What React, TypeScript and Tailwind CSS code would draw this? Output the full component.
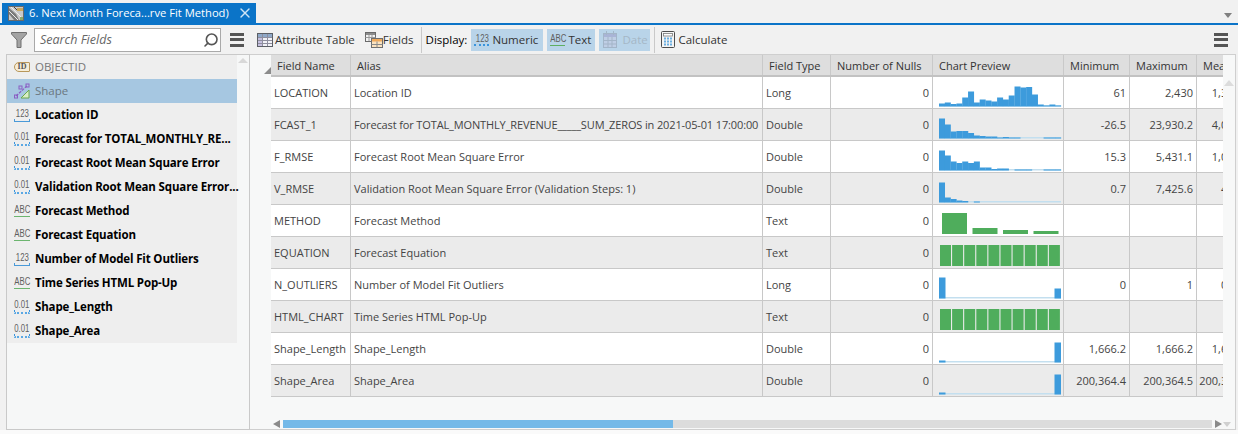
import { Search, X } from 'lucide-react'
import type { ReactNode } from 'react'

type FieldKind = 'long' | 'double' | 'text'

type Row = {
  name: string
  alias: string
  type: string
  chart: ReactNode
  min?: string
  max?: string
  mean?: string
}

const BLUE = '#3d9bdc'
const PALE = '#c3dfef'
const GREEN = '#4fad5c'

// heights in px, one per bin, left to right
const Hist = ({ bins }: { bins: number[] }) => {
  const w = 122 / bins.length
  return (
    <svg width="131" height="31" className="block">
      <rect x="6" y="28" width="122" height="1.5" fill={PALE} />
      {bins.map((h, i) =>
        h > 0 ? <rect key={i} x={6 + i * w} y={29.5 - h} width={w + 0.2} height={h} fill={BLUE} /> : null,
      )}
    </svg>
  )
}

const Bars = ({ bars, width, gap, start }: { bars: number[]; width: number; gap: number; start: number }) => (
  <svg width="131" height="31" className="block">
    {bars.map((h, i) => (
      <rect key={i} x={start + i * (width + gap)} y={29 - h} width={width} height={h} fill={GREEN} />
    ))}
  </svg>
)

const Even = () => <Bars bars={[21, 21, 21, 21, 21, 21, 21, 21, 21, 21]} width={11} gap={1.1} start={7} />

const EndBins = ({ first, last }: { first: number; last: number }) => (
  <svg width="131" height="31" className="block">
    <rect x="6" y="28" width="122" height="1.5" fill={PALE} />
    <rect x="6" y={29.5 - first} width="6.5" height={first} fill={BLUE} />
    <rect x="121.5" y={29.5 - last} width="6.5" height={last} fill={BLUE} />
  </svg>
)

const rows: Row[] = [
  {
    name: 'LOCATION',
    alias: 'Location ID',
    type: 'Long',
    chart: <Hist bins={[3, 4, 2.5, 3, 9, 15, 4, 7, 6, 5, 9, 7, 11, 20, 19, 19.5, 12, 2, 1, 2, 1]} />,
    min: '61',
    max: '2,430',
    mean: '1,345.7',
  },
  {
    name: 'FCAST_1',
    alias: 'Forecast for TOTAL_MONTHLY_REVENUE_____SUM_ZEROS in 2021-05-01 17:00:00',
    type: 'Double',
    chart: <Hist bins={[20, 14, 7, 7.5, 7.5, 5.5, 3, 2.5, 2, 2, 1, 1.5, 1, 1, 0, 0, 0, 0, 1, 1, 1]} />,
    min: '-26.5',
    max: '23,930.2',
    mean: '4,012.9',
  },
  {
    name: 'F_RMSE',
    alias: 'Forecast Root Mean Square Error',
    type: 'Double',
    chart: <Hist bins={[20, 15, 9, 7.5, 9, 7.5, 9, 3, 3, 1.5, 2, 2, 0, 1, 1, 1, 0, 0, 1, 1, 1]} />,
    min: '15.3',
    max: '5,431.1',
    mean: '1,027.4',
  },
  {
    name: 'V_RMSE',
    alias: 'Validation Root Mean Square Error (Validation Steps: 1)',
    type: 'Double',
    chart: <Hist bins={[20, 5, 3.5, 2, 1.5, 0, 1, 0, 0, 0, 0, 0, 0, 0, 0, 0, 0, 0, 0, 0, 0]} />,
    min: '0.7',
    max: '7,425.6',
    mean: '417.6',
  },
  {
    name: 'METHOD',
    alias: 'Forecast Method',
    type: 'Text',
    chart: <Bars bars={[21, 6, 4, 3]} width={25} gap={5.5} start={9} />,
  },
  { name: 'EQUATION', alias: 'Forecast Equation', type: 'Text', chart: <Even /> },
  {
    name: 'N_OUTLIERS',
    alias: 'Number of Model Fit Outliers',
    type: 'Long',
    chart: <EndBins first={21} last={10} />,
    min: '0',
    max: '1',
    mean: '0.102',
  },
  { name: 'HTML_CHART', alias: 'Time Series HTML Pop-Up', type: 'Text', chart: <Even /> },
  {
    name: 'Shape_Length',
    alias: 'Shape_Length',
    type: 'Double',
    chart: <EndBins first={2} last={20} />,
    min: '1,666.2',
    max: '1,666.2',
    mean: '1,666.2',
  },
  {
    name: 'Shape_Area',
    alias: 'Shape_Area',
    type: 'Double',
    chart: <EndBins first={2} last={20} />,
    min: '200,364.4',
    max: '200,364.5',
    mean: '200,364.5',
  },
]

const fields: { label: string; kind: FieldKind }[] = [
  { label: 'Location ID', kind: 'long' },
  { label: 'Forecast for TOTAL_MONTHLY_RE...', kind: 'double' },
  { label: 'Forecast Root Mean Square Error', kind: 'double' },
  { label: 'Validation Root Mean Square Error...', kind: 'double' },
  { label: 'Forecast Method', kind: 'text' },
  { label: 'Forecast Equation', kind: 'text' },
  { label: 'Number of Model Fit Outliers', kind: 'long' },
  { label: 'Time Series HTML Pop-Up', kind: 'text' },
  { label: 'Shape_Length', kind: 'double' },
  { label: 'Shape_Area', kind: 'double' },
]

const KindLabel = ({ kind }: { kind: FieldKind }) => {
  const label = kind === 'long' ? '123' : kind === 'double' ? '0.01' : 'ABC'
  return (
    <div className="flex h-[9px] justify-center">
      <span className="scale-x-[.78] font-['Liberation_Sans',sans-serif] text-[10px] leading-[9px] font-normal whitespace-nowrap text-[#5f5f5f]">
        {label}
      </span>
    </div>
  )
}

const KindIcon = ({ kind }: { kind: FieldKind }) => {
  const line =
    kind === 'text'
      ? 'mt-[2px] border-b-[1.5px] border-[#6cb56f]'
      : kind === 'long'
        ? 'mt-[1px] h-[3px] border-x border-b border-[#4a9ad8]'
        : 'mt-[1px] h-[4px] border-x border-b-2 border-[#3a94dc] border-b-[#5aa8e4] border-dotted'
  return (
    <div className="flex w-[16px] flex-col items-stretch">
      <KindLabel kind={kind} />
      <div className={line} />
    </div>
  )
}

const Hamburger = () => (
  <div className="flex w-[14px] flex-col gap-[2.5px]">
    <div className="h-[3px] bg-[#555]" />
    <div className="h-[3px] bg-[#555]" />
    <div className="h-[3px] bg-[#555]" />
  </div>
)

const Funnel = () => (
  <svg width="16" height="16" viewBox="0 0 16 16">
    <path d="M0.5 0.5h15v1.5L10 8v7.5H6V8L0.5 2z" fill="#a3a3a3" stroke="#707070" />
  </svg>
)

const TabIcon = () => (
  <svg width="16" height="15" viewBox="0 0 16 15">
    <rect x="0.5" y="0.5" width="15" height="14" fill="#c9c9c9" stroke="#6a6a6a" />
    <path d="M1 2l7 6 3 6H6L1 8z" fill="#7b7b7b" />
    <path d="M1 5l9 9M3 1l11 11" stroke="#eeeeee" />
    <rect x="9" y="2" width="6" height="3" fill="#c9a860" />
    <path d="M6 1l3 3" stroke="#444" />
    <rect x="12" y="11" width="3" height="3" fill="#8aa66b" />
  </svg>
)

const TableIcon = () => (
  <svg width="16" height="14" viewBox="0 0 16 14">
    <rect x="0.5" y="0.5" width="15" height="13" fill="#f2f2f7" stroke="#5c5f66" />
    <rect x="1" y="1" width="14" height="3" fill="#8fa8c8" />
    <rect x="1" y="4" width="4" height="9" fill="#c6c0e0" />
    <path d="M5.5 1v12M10.5 1v12M1 4.5h14M1 7.5h14M1 10.5h14" stroke="#8f8f9f" />
  </svg>
)

const FieldsIcon = () => (
  <svg width="18" height="16" viewBox="0 0 18 16">
    <rect x="0.5" y="0.5" width="10" height="9" fill="#f3f3f3" stroke="#6a6a6a" />
    <rect x="1" y="1" width="9" height="2" fill="#8c8c8c" />
    <path d="M0.5 5.5h10M4 3v6M7 3v6" stroke="#9a9a9a" />
    <rect x="6.5" y="6.5" width="11" height="9" fill="#fbe3c0" stroke="#6e6e6e" />
    <rect x="7" y="7" width="10" height="2.5" fill="#f0aa5c" />
    <path d="M12 9.5v6M6.5 12.5h11" stroke="#8a8a8a" />
  </svg>
)

const CalendarIcon = () => (
  <svg width="14" height="17" viewBox="0 0 14 17" opacity="0.5">
    <rect x="0.5" y="2.5" width="13" height="14" fill="#c5c9e2" stroke="#8f97a8" />
    <rect x="1" y="3" width="12" height="3" fill="#9a96c4" />
    <path d="M5 6v10M9 6v10M0.5 9.5h13M0.5 13h13" stroke="#8f97a8" />
    <path d="M3.5 0v4M10.5 0v4" stroke="#8f97a8" />
  </svg>
)

const CalcIcon = () => (
  <svg width="14" height="17" viewBox="0 0 14 17">
    <rect x="0.5" y="0.5" width="13" height="16" rx="1" fill="#f4f4f4" stroke="#4d4d4d" />
    <rect x="2.5" y="2.5" width="9" height="2.5" fill="#fff" stroke="#7a7a7a" strokeWidth="0.8" />
    <path d="M3 7.5h2M6 7.5h2M9 7.5h2M3 10.5h2M6 10.5h2M9 10.5h2M3 13.5h2M6 13.5h2M9 13.5h2" stroke="#6aaee0" strokeWidth="2" />
  </svg>
)

const DisplayToggle = ({ children, className }: { children: ReactNode; className: string }) => (
  <div className={`flex h-[22px] items-center bg-[#b9d4e9] ${className}`}>{children}</div>
)

const headers = ['Field Name', 'Alias', 'Field Type', 'Number of Nulls', 'Chart Preview', 'Minimum', 'Maximum', 'Mean']
const COLS = 'grid-cols-[80px_412px_68px_102px_131px_66px_67px_55px]'

const FieldList = () => (
  <div className="flex h-[376px] w-[244px] flex-none border border-[#c9c9c9] bg-[#f6f7f7]">
    <div className="w-[230px] flex-none">
      <div className="bg-[#eeeeee]">
        <div className="flex h-[24px] items-center pl-[7px]">
          <div className="flex h-[10px] w-[16px] items-center justify-center rounded-l-[5px] rounded-r-[1px] border border-[#b8975a] bg-[#f6edd8] font-['Liberation_Serif',serif] text-[8px] font-bold text-[#555]">
            ID
          </div>
          <span className="ml-[5px] text-[11.5px] text-[#777]">OBJECTID</span>
        </div>
        <div className="flex h-[24px] items-center bg-[#a6c7e1] pl-[7px]">
          <svg width="16" height="16" viewBox="0 0 16 16">
            <path d="M2 13L13 3" stroke="#8a5fc4" strokeWidth="1.2" strokeDasharray="3 1" />
            <rect x="0.5" y="12" width="3" height="3" fill="none" stroke="#8a5fc4" />
            <rect x="5" y="3" width="3" height="3" fill="none" stroke="#8a5fc4" />
            <rect x="12" y="1" width="3" height="3" fill="none" stroke="#8a5fc4" />
            <path d="M7 15L15 7v8z" fill="#d9eec4" stroke="#6aa84f" />
          </svg>
          <span className="ml-[5px] text-[11.5px] text-[#6b7780]">Shape</span>
        </div>
        {fields.map((f) => (
          <div key={f.label} className="flex h-[24px] items-center pl-[7px]">
            <KindIcon kind={f.kind} />
            <span className="ml-[5px] text-[11.5px] font-bold tracking-[-0.15px] whitespace-nowrap text-black">{f.label}</span>
          </div>
        ))}
      </div>
    </div>
    <div className="flex flex-1 justify-center pt-[3px]">
      <div className="h-0 w-0 border-x-[5px] border-b-[5px] border-x-transparent border-b-[#d8d8d8]" />
    </div>
  </div>
)

const FieldTable = () => (
  <div className="flex h-[376px] flex-1 flex-col border-t border-r border-b border-[#cfcfcf] bg-[#f7f8f8]">
    <div className="flex min-h-0 flex-1">
      <div className="relative w-[21px] flex-none">
        <div className="absolute top-[12px] right-[0px] h-0 w-0 border-b-[7px] border-l-[7px] border-b-[#8c8c8c] border-l-transparent" />
      </div>
      <div className="w-[952px] flex-none overflow-hidden">
        <div className={`grid h-[22px] w-[981px] ${COLS} border-b-2 border-[#c2c2c2] bg-[#dedede]`}>
          {headers.map((h) => (
            <div key={h} className="flex items-center border-r border-[#c9c9c9] pt-[2px] pl-[6px] text-[11px] whitespace-nowrap text-[#333]">
              {h}
            </div>
          ))}
        </div>
        {rows.map((r, i) => (
          <div
            key={r.name}
            className={`grid h-[32px] w-[981px] ${COLS} border-b border-[#c8c8c8] text-[11px] whitespace-nowrap text-[#444] ${i % 2 === 1 ? 'bg-[#ebebeb]' : 'bg-white'}`}
          >
            <div className="flex items-center border-r border-[#c8c8c8] pt-[2px] pl-[3px]">{r.name}</div>
            <div className={`flex items-center border-r border-[#c8c8c8] pt-[2px] pl-[3px] ${r.name === 'FCAST_1' ? 'tracking-[-0.13px]' : ''}`}>{r.alias}</div>
            <div className="flex items-center border-r border-[#c8c8c8] pt-[2px] pl-[3px]">{r.type}</div>
            <div className="flex items-center justify-end border-r border-[#c8c8c8] pt-[2px] pr-[3px]">0</div>
            <div className="border-r border-[#c8c8c8]">{r.chart}</div>
            <div className="flex items-center justify-end border-r border-[#c8c8c8] pt-[2px] pr-[3px]">{r.min}</div>
            <div className="flex items-center justify-end border-r border-[#c8c8c8] pt-[2px] pr-[3px]">{r.max}</div>
            <div className="flex items-center justify-end pt-[2px] pr-[3px]">{r.mean}</div>
          </div>
        ))}
      </div>
      <div className="flex flex-1 justify-center pt-[25px]">
        <div className="h-0 w-0 border-x-[5px] border-b-[6px] border-x-transparent border-b-[#dcdcdc]" />
      </div>
    </div>
    <div className="mb-[1px] flex h-[8px] flex-none items-center pl-[23px]">
      <div className="h-0 w-0 border-y-[4px] border-r-[7px] border-y-transparent border-r-[#8a8a8a]" />
      <div className="ml-[3px] flex h-[8px] w-[929px] bg-[#dcdcdc]">
        <div className="h-full w-[390px] bg-[#74b9e8]" />
      </div>
      <div className="ml-[3px] h-0 w-0 border-y-[4px] border-l-[7px] border-y-transparent border-l-[#8a8a8a]" />
      <div className="ml-[1px] h-0 w-0 border-x-[4px] border-t-[5px] border-x-transparent border-t-[#d0d0d0]" />
    </div>
  </div>
)

export default function App() {
  return (
    <div className="flex h-[434px] w-[1238px] flex-col overflow-hidden bg-[#f1f1f1] font-['Open_Sans','Noto_Sans',sans-serif] text-[12px]">
      <div className="flex h-[23px] flex-none items-end justify-between pl-[2px]">
        <div className="flex h-[20px] w-[254px] items-center bg-[#0b74c8] pl-[6px] text-white">
          <TabIcon />
          <span className="ml-[5px] text-[11.2px] whitespace-nowrap">6. Next Month Foreca...rve Fit Method)</span>
          <X size={16} strokeWidth={2} className="mr-[3px] ml-auto text-[#cfe4f5]" />
        </div>
        <div className="mr-[6px] mb-[5px] h-0 w-0 border-x-[4px] border-t-[5px] border-x-transparent border-t-[#808080]" />
      </div>
      <div className="h-[2px] flex-none bg-[#0b74c8]" />

      <div className="flex h-[29px] flex-none items-center">
        <div className="flex w-[250px] flex-none items-center pl-[11px]">
          <Funnel />
          <div className="mt-[1px] ml-[7px] flex h-[24px] w-[187px] items-center border border-[#a9a9a9] bg-white pr-[1px] pl-[5px]">
            <span className="pt-[1px] text-[12.5px] text-[#666] italic">Search Fields</span>
            <Search size={16} strokeWidth={2.4} className="ml-auto -scale-x-100 text-[#555]" />
          </div>
          <div className="ml-[9px]">
            <Hamburger />
          </div>
        </div>
        <div className="flex flex-1 items-center pl-[7px] text-[11.5px] text-[#333]">
          <TableIcon />
          <span className="ml-[2px] whitespace-nowrap">Attribute Table</span>
          <div className="ml-[10px]">
            <FieldsIcon />
          </div>
          <span>Fields</span>
          <div className="ml-[7px] h-[26px] w-px bg-[#c9c9c9]" />
          <span className="ml-[4px] text-black">Display:</span>
          <DisplayToggle className="ml-[4px] w-[72px] pl-[3px]">
            <div className="flex w-[15px] flex-col">
              <KindLabel kind="long" />
              <div className="mt-[1px] border-b-2 border-dotted border-[#3a94dc]" />
            </div>
            <span className="ml-[3px] text-[#333]">Numeric</span>
          </DisplayToggle>
          <DisplayToggle className="ml-[4px] w-[48px] pl-[3px]">
            <div className="flex w-[15px] flex-col">
              <KindLabel kind="text" />
              <div className="mt-[2px] border-b border-[#5fae62]" />
            </div>
            <span className="ml-[3px] text-[#333]">Text</span>
          </DisplayToggle>
          <DisplayToggle className="ml-[4px] w-[51px] pl-[4px]">
            <CalendarIcon />
            <span className="ml-[5px] text-[#a5b7c6]">Date</span>
          </DisplayToggle>
          <div className="ml-[4px] h-[26px] w-px bg-[#c9c9c9]" />
          <div className="ml-[6px]">
            <CalcIcon />
          </div>
          <span className="ml-[3px]">Calculate</span>
          <div className="mr-[10px] ml-auto">
            <Hamburger />
          </div>
        </div>
      </div>

      <div className="flex flex-none pr-[2px] pl-[6px]">
        <FieldList />
        <FieldTable />
      </div>
      <div className="flex-1 bg-[#fafafa]" />
    </div>
  )
}
